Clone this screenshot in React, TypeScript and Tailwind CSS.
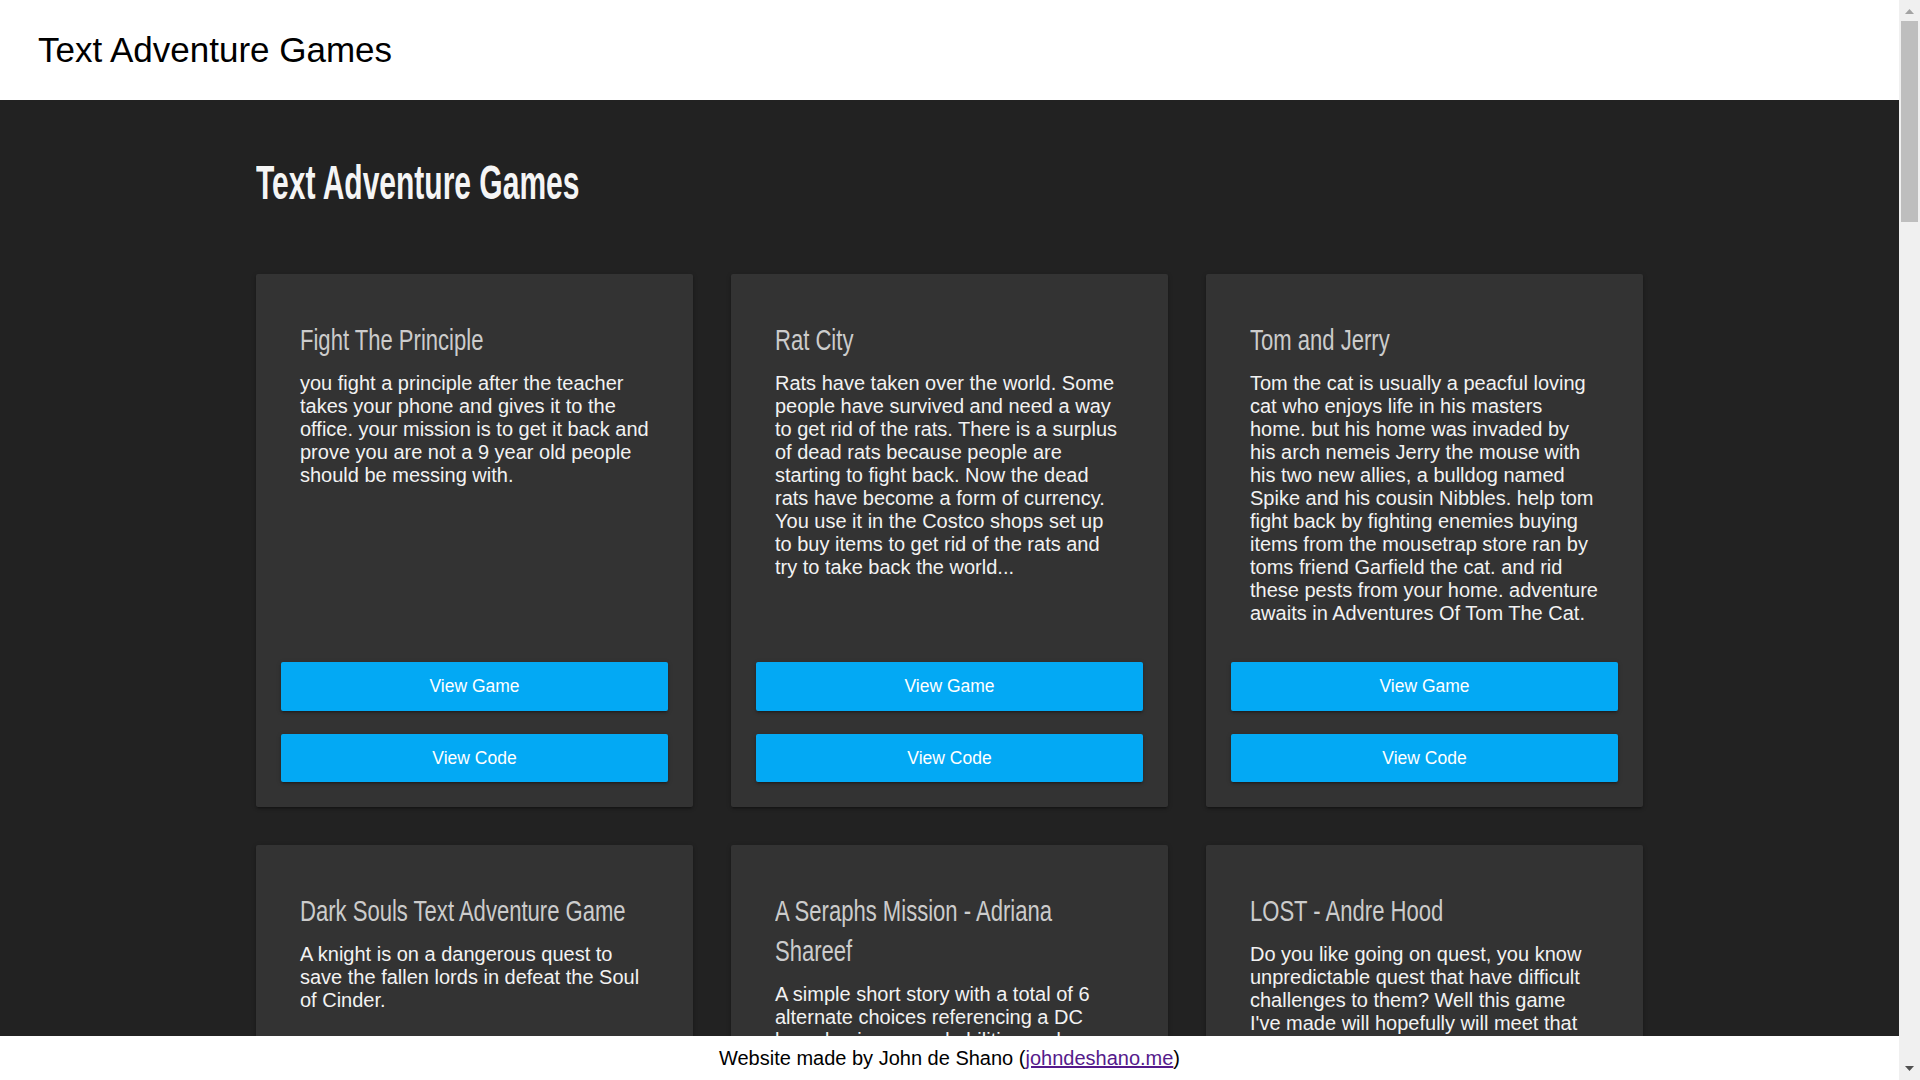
import React from "react";

type Game = { title: string; text: string };

const games: Game[] = [
  {
    title: "Fight The Principle",
    text: "you fight a principle after the teacher takes your phone and gives it to the office. your mission is to get it back and prove you are not a 9 year old people should be messing with.",
  },
  {
    title: "Rat City",
    text: "Rats have taken over the world. Some people have survived and need a way to get rid of the rats. There is a surplus of dead rats because people are starting to fight back. Now the dead rats have become a form of currency. You use it in the Costco shops set up to buy items to get rid of the rats and try to take back the world...",
  },
  {
    title: "Tom and Jerry",
    text: "Tom the cat is usually a peacful loving cat who enjoys life in his masters home. but his home was invaded by his arch nemeis Jerry the mouse with his two new allies, a bulldog named Spike and his cousin Nibbles. help tom fight back by fighting enemies buying items from the mousetrap store ran by toms friend Garfield the cat. and rid these pests from your home. adventure awaits in Adventures Of Tom The Cat.",
  },
  {
    title: "Dark Souls Text Adventure Game",
    text: "A knight is on a dangerous quest to save the fallen lords in defeat the Soul of Cinder.",
  },
  {
    title: "A Seraphs Mission - Adriana Shareef",
    text: "A simple short story with a total of 6 alternate choices referencing a DC based universe and abilities and powers of the heroes within it.",
  },
  {
    title: "LOST - Andre Hood",
    text: "Do you like going on quest, you know unpredictable quest that have difficult challenges to them? Well this game I've made will hopefully will meet that expectation. Go on an adventure and find your way home.",
  },
  {
    title: "Zombie Escape",
    text: "The city has fallen to the undead. Gather supplies, find your friends and make it to the rescue helicopter before night falls.",
  },
  {
    title: "The Haunted Mansion",
    text: "You wake up inside an old mansion with no memory of how you got there. Explore the rooms, solve the puzzles and escape before the ghosts find you.",
  },
  {
    title: "Space Station Omega",
    text: "The oxygen on the station is running out. Repair the systems, trade with the crew and survive long enough to reach the escape pods.",
  },
  {
    title: "Dragon Quest",
    text: "A dragon has been burning the villages of the kingdom. Train your hero, buy weapons from the blacksmith and slay the beast.",
  },
  {
    title: "Lost In The Woods",
    text: "You went camping with your friends and got separated from the group. Find food, build a shelter and find your way back to camp.",
  },
  {
    title: "Pirate Treasure",
    text: "Sail the seas, fight rival pirates and follow the old map to find the legendary treasure of Captain Redbeard.",
  },
  {
    title: "Escape The School",
    text: "The bell rang but the doors are locked. Sneak past the teachers and find a way out of the school before the janitor catches you.",
  },
  {
    title: "The Last Knight",
    text: "The kingdom has fallen and you are the last knight standing. Rebuild your army and take back the castle from the dark lord.",
  },
  {
    title: "Robot Uprising",
    text: "The robots have taken control of the factory. Hack the terminals, collect parts and shut down the main computer.",
  },
  {
    title: "Jungle Run",
    text: "Your plane crashed in the middle of the jungle. Survive the wild animals and find the lost temple to signal for help.",
  },
  {
    title: "Mystery Of The Missing Cat",
    text: "Your neighbor's cat has gone missing. Talk to the people on your street, find the clues and solve the mystery.",
  },
  {
    title: "Castle Siege",
    text: "An enemy army is marching on your castle. Prepare the defenses, recruit soldiers and hold the walls until help arrives.",
  },
  {
    title: "Deep Sea Dive",
    text: "Dive to the bottom of the ocean to explore a sunken ship. Watch your air supply and avoid the sharks.",
  },
  {
    title: "Wild West Showdown",
    text: "A gang of outlaws has taken over the town. Become the new sheriff and bring justice back to the wild west.",
  },
  {
    title: "Alien Invasion",
    text: "Strange lights appear in the sky over your farm. Find out what the aliens want and stop them before it is too late.",
  },
  {
    title: "The Lost City",
    text: "Follow the journal of a missing explorer through the desert to find the lost city and the secrets hidden inside.",
  },
  {
    title: "Ninja Training",
    text: "Train at the hidden village, learn new skills from the masters and pass the final test to become a true ninja.",
  },
  {
    title: "Monster Hunter",
    text: "Monsters roam the land around your village. Hunt them down, craft new gear from their parts and protect your home.",
  },
];

const btn =
  "flex h-[48px] w-full items-center justify-center rounded-[2px] bg-[#03a9f4] text-[17.5px] text-white shadow-[0_2px_2px_0_rgba(0,0,0,0.14),0_3px_1px_-2px_rgba(0,0,0,0.12),0_1px_5px_0_rgba(0,0,0,0.2)]";

function Card({ game }: { game: Game }) {
  return (
    <div className="flex flex-col rounded-[2px] bg-[#333333] shadow-[0_2px_2px_0_rgba(0,0,0,0.14),0_3px_1px_-2px_rgba(0,0,0,0.12),0_1px_5px_0_rgba(0,0,0,0.2)]">
      <div className="px-[44px] pb-[37px] pt-[46px]">
        <h2 className="mb-[12px] w-[475px] origin-left scale-x-[0.735] text-[30px] font-normal leading-[40px] text-[#cccccc]">
          {game.title}
        </h2>
        <p className="text-[20px] leading-[23px] text-[#f2f2f2]">{game.text}</p>
      </div>
      <div className="mt-auto flex flex-col gap-[23px] px-[25px] pb-[25px]">
        <a href="#" className={btn + " h-[49px]"}>
          View Game
        </a>
        <a href="#" className={btn}>
          View Code
        </a>
      </div>
    </div>
  );
}

function Scrollbar() {
  return (
    <aside className="flex w-[21px] shrink-0 flex-col bg-[#f0f0f0]">
      <div className="flex h-[21px] items-center justify-center">
        <svg width="9" height="5" viewBox="0 0 9 5" className="mt-[2px]">
          <polygon points="4.5,0 9,5 0,5" fill="#a3a3a3" />
        </svg>
      </div>
      <div className="mx-[2px] h-[201px] bg-[#bebebe]" />
      <div className="flex-1" />
      <div className="flex h-[21px] items-center justify-center">
        <svg width="9" height="5" viewBox="0 0 9 5" className="mb-[2px]">
          <polygon points="0,0 9,0 4.5,5" fill="#505050" />
        </svg>
      </div>
    </aside>
  );
}

export default function App() {
  return (
    <div className="flex h-screen font-['Liberation_Sans',Arial,sans-serif]">
      <div className="relative min-w-0 flex-1">
        <div className="h-full overflow-y-auto bg-[#222222] [scrollbar-width:none]">
          <header className="flex h-[100px] items-center bg-white pl-[38px]">
            <span className="text-[35px] text-black">Text Adventure Games</span>
          </header>
          <main className="mx-auto w-[1387px] pb-[80px] pt-[59px]">
            <h1 className="w-[840px] origin-left scale-x-[0.625] text-[48px] font-bold leading-[48px] text-[#f5f5f5]">
              Text Adventure Games
            </h1>
            <div className="mt-[67px] grid grid-cols-[repeat(3,437px)] gap-[38px]">
              {games.map((g) => (
                <Card key={g.title} game={g} />
              ))}
            </div>
          </main>
        </div>
        <footer className="absolute bottom-0 left-0 right-0 flex h-[44px] items-center justify-center bg-white text-[20px] text-black">
          <span>
            Website made by John de Shano (
            <a href="#" className="text-[#551a8b] underline">
              johndeshano.me
            </a>
            )
          </span>
        </footer>
      </div>
      <Scrollbar />
    </div>
  );
}
